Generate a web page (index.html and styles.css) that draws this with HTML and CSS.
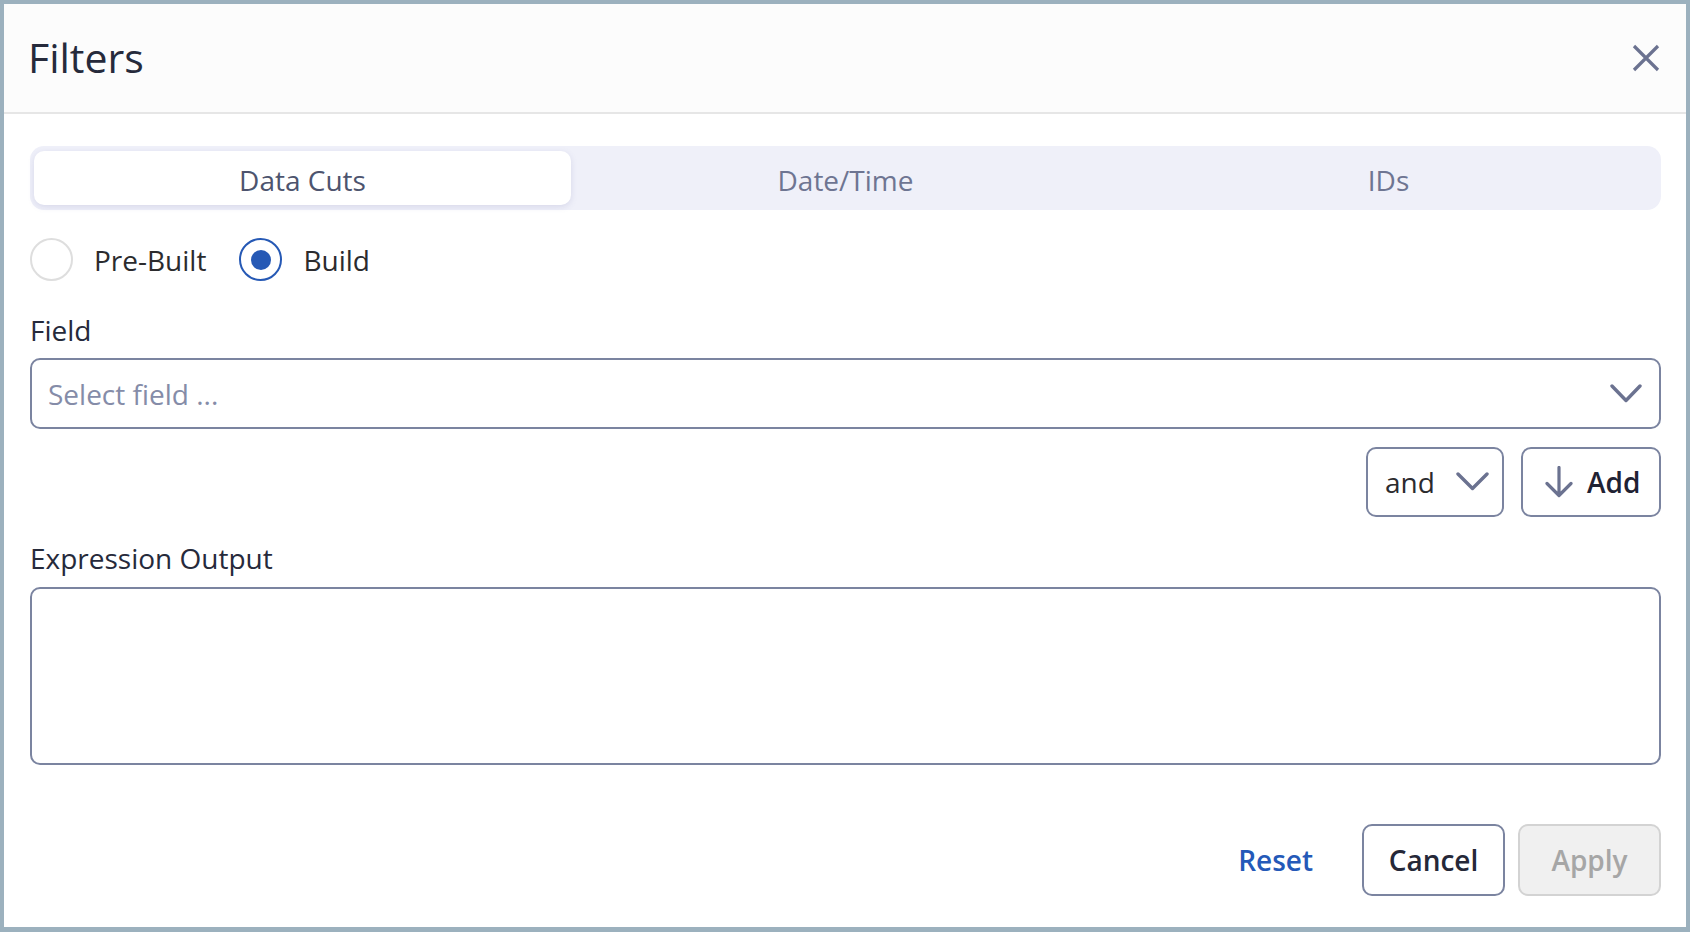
FILE: index.html
```html
<!DOCTYPE html>
<html lang="en">
<head>
<meta charset="utf-8">
<title>Filters</title>
<link rel="stylesheet" href="styles.css">
</head>
<body>
<div class="modal">
  <header class="modal-header">
    <h1 class="title">Filters</h1>
    <button class="close" aria-label="Close">
      <svg width="28" height="28" viewBox="0 0 28 28"><path d="M2 2L26 26M26 2L2 26" stroke="#6b7290" stroke-width="3.2" fill="none"/></svg>
    </button>
  </header>
  <main class="modal-body">
    <div class="tabs">
      <div class="tab active">Data Cuts</div>
      <div class="tab">Date/Time</div>
      <div class="tab">IDs</div>
    </div>
    <div class="radios">
      <label class="radio"><span class="circle"></span><span>Pre-Built</span></label>
      <label class="radio"><span class="circle checked"></span><span>Build</span></label>
    </div>
    <div class="label field-label">Field</div>
    <div class="select">
      <span class="placeholder">Select field ...</span>
      <svg class="chev" width="32" height="20" viewBox="0 0 32 20"><polyline points="2,2 16,16.5 30,2" stroke="#6b7290" stroke-width="3.4" fill="none" stroke-linecap="round" stroke-linejoin="round"/></svg>
    </div>
    <div class="actions">
      <div class="and-select">
        <span>and</span>
        <svg width="33" height="20" viewBox="0 0 33 20"><polyline points="2,2 16.5,16.5 31,2" stroke="#6b7290" stroke-width="3.4" fill="none" stroke-linecap="round" stroke-linejoin="round"/></svg>
      </div>
      <button class="add-btn">
        <svg width="28" height="32" viewBox="0 0 28 32"><path d="M14 1.5V29M2 17.5L14 29.5L26 17.5" stroke="#6b7290" stroke-width="3.2" fill="none" stroke-linecap="round" stroke-linejoin="round"/></svg>
        <span>Add</span>
      </button>
    </div>
    <div class="label expr-label">Expression Output</div>
    <div class="textarea"></div>
    <div class="footer">
      <button class="btn reset">Reset</button>
      <button class="btn cancel">Cancel</button>
      <button class="btn apply">Apply</button>
    </div>
  </main>
</div>
</body>
</html>
```
FILE: styles.css
```css
* { box-sizing: border-box; }
html, body { margin: 0; padding: 0; }
body {
  font-family: "Open Sans", "Noto Sans", sans-serif;
  background: #ffffff;
}
.modal {
  width: 1690px;
  height: 932px;
  border: 4px solid #9cb1be;
  border-bottom-width: 5px;
  background: #ffffff;
  display: flex;
  flex-direction: column;
}
.modal-header {
  height: 110px;
  background: #fcfcfc;
  border-bottom: 2px solid #e6e6e6;
  display: flex;
  align-items: center;
  justify-content: space-between;
  padding: 0 26px 0 24px;
}
.title {
  margin: 0;
  font-size: 41px;
  font-weight: 400;
  color: #262a3b;
  line-height: 1.36;
}
.close {
  border: 0;
  background: none;
  padding: 0;
  width: 28px;
  height: 28px;
  display: flex;
}
.modal-body {
  padding: 32px 25px 0 26px;
  display: flex;
  flex-direction: column;
}
.tabs {
  height: 64px;
  background: #eff0f9;
  border-radius: 14px;
  padding: 5px 4px;
  display: flex;
  gap: 6px;
}
.tab {
  flex: 1;
  display: flex;
  align-items: center;
  justify-content: center;
  padding-top: 4px;
  font-size: 28px;
  color: #6e7592;
  border-radius: 10px;
}
.tab.active {
  background: #ffffff;
  color: #4d546e;
  box-shadow: 0 2px 6px rgba(110, 110, 170, 0.18);
}
.radios {
  margin-top: 28px;
  display: flex;
  gap: 33px;
  height: 43px;
}
.radio {
  display: flex;
  align-items: center;
  gap: 21px;
  font-size: 28px;
  color: #2b2b2e;
}
.circle {
  width: 43px;
  height: 43px;
  border-radius: 50%;
  border: 2px solid #dedede;
  display: flex;
  align-items: center;
  justify-content: center;
}
.circle.checked {
  border-color: #2659b5;
}
.circle.checked::after {
  content: "";
  width: 20px;
  height: 20px;
  border-radius: 50%;
  background: #2659b5;
}
.label {
  font-size: 28px;
  line-height: 38px;
  color: #262a3b;
}
.field-label { margin-top: 30px; }
.select {
  margin-top: 9px;
  height: 71px;
  border: 2px solid #7b84a0;
  border-radius: 10px;
  display: flex;
  align-items: center;
  justify-content: space-between;
  padding: 0 17px 0 16px;
}
.placeholder {
  font-size: 28px;
  color: #858ca8;
}
.actions {
  margin-top: 18px;
  display: flex;
  justify-content: flex-end;
  gap: 17px;
}
.and-select {
  width: 138px;
  height: 70px;
  border: 2px solid #7b84a0;
  border-radius: 10px;
  display: flex;
  align-items: center;
  padding: 0 0 0 17px;
  gap: 21px;
  font-size: 28px;
  color: #2b2b2e;
}
.add-btn {
  width: 140px;
  height: 70px;
  border: 2px solid #7b84a0;
  border-radius: 10px;
  background: #ffffff;
  display: flex;
  align-items: center;
  padding: 0 0 0 22px;
  gap: 14px;
  font-family: inherit;
  font-size: 28px;
  font-weight: 600;
  color: #1f2233;
}
.expr-label { margin-top: 22px; }
.textarea {
  margin-top: 10px;
  height: 178px;
  border: 2px solid #7b84a0;
  border-radius: 10px;
}
.footer {
  margin-top: 59px;
  display: flex;
  justify-content: flex-end;
  gap: 13px;
}
.btn {
  height: 72px;
  border-radius: 10px;
  font-family: inherit;
  font-size: 28px;
  font-weight: 600;
  background: #ffffff;
  border: 2px solid transparent;
}
.reset {
  padding: 0 34px;
  color: #2459b8;
  background: transparent;
}
.cancel {
  width: 143px;
  border-color: #7b84a0;
  color: #252838;
}
.apply {
  width: 143px;
  background: #f0f0f0;
  border-color: #d3d3d3;
  color: #a6a6a6;
}
```
